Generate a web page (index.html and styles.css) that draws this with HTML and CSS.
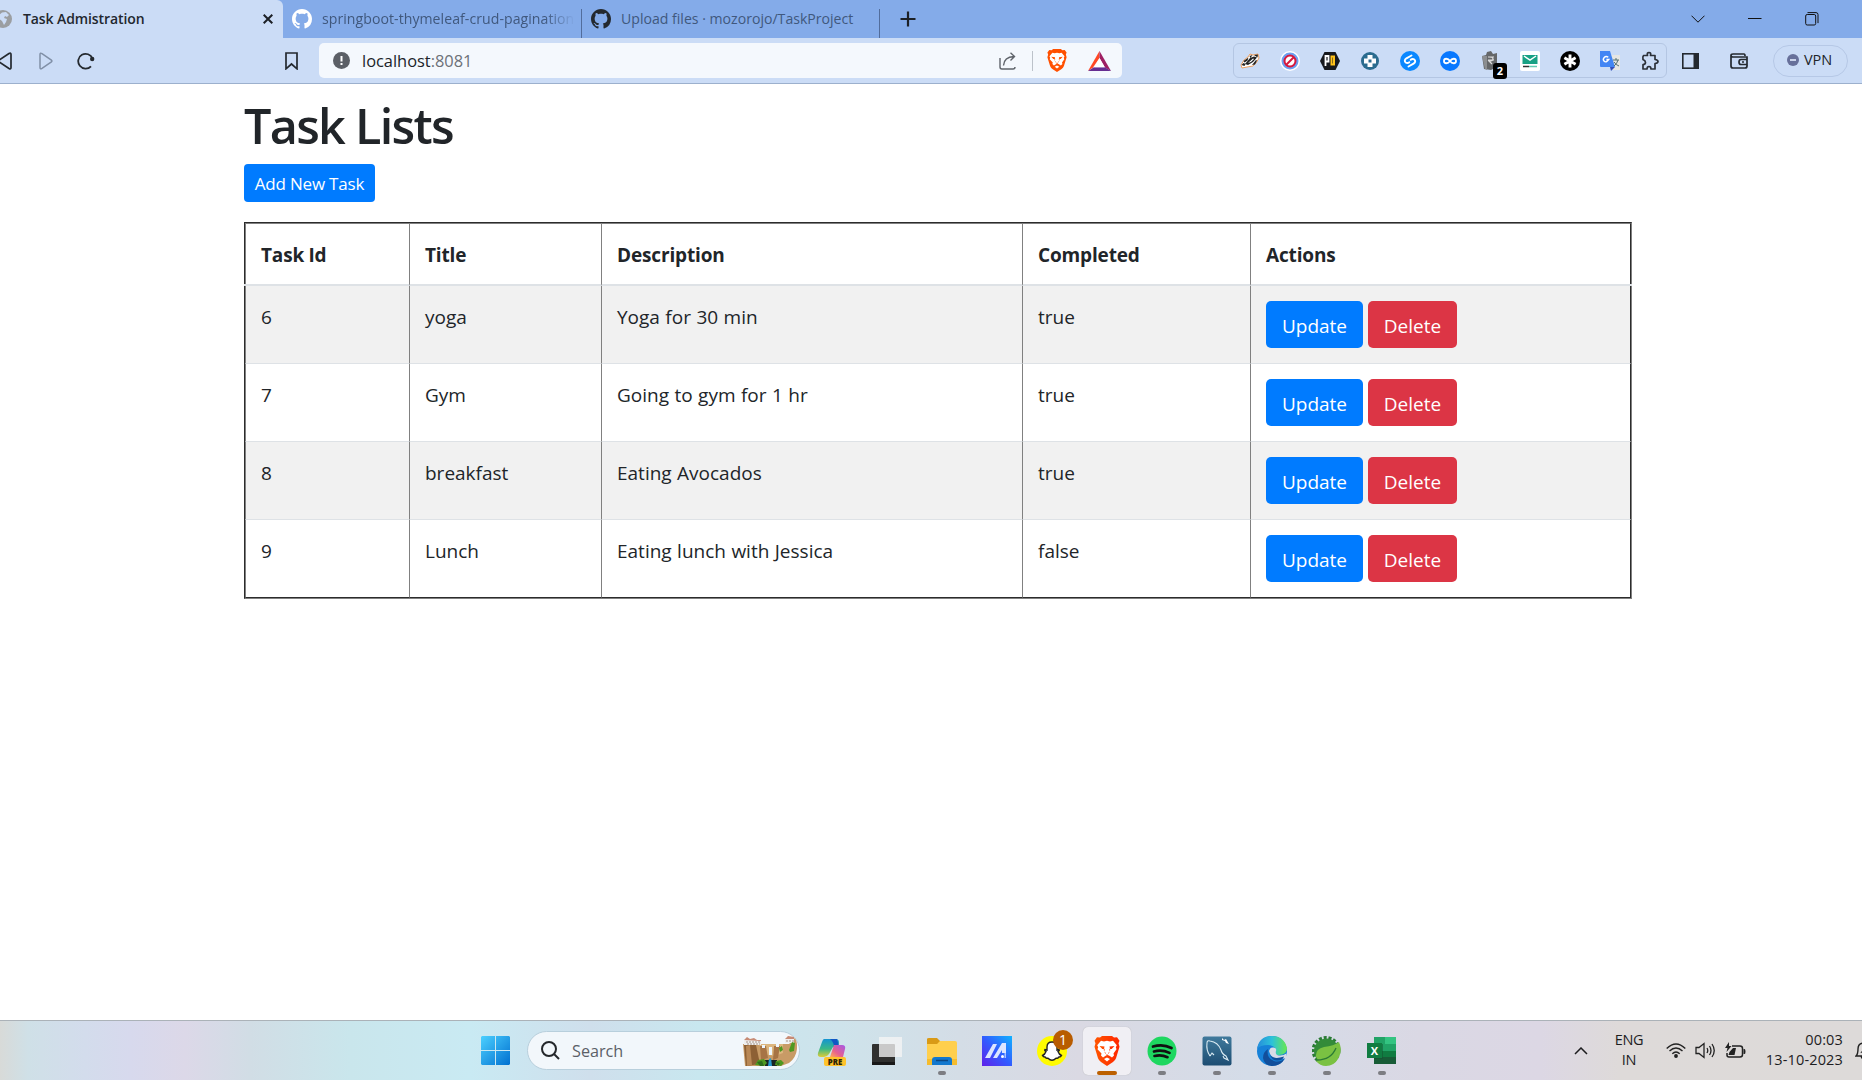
FILE: index.html
```html
<!DOCTYPE html>
<html lang="en">
<head>
<meta charset="utf-8">
<title>Task Admistration</title>
<link rel="stylesheet" href="styles.css">
</head>
<body>
<svg class="defs" width="0" height="0" aria-hidden="true">
  <defs>
    <path id="octocat" d="M8 0C3.58 0 0 3.58 0 8c0 3.54 2.29 6.53 5.47 7.59.4.07.55-.17.55-.38 0-.19-.01-.82-.01-1.49-2.01.37-2.53-.49-2.69-.94-.09-.23-.48-.94-.82-1.13-.28-.15-.68-.52-.01-.53.63-.01 1.08.58 1.23.82.72 1.21 1.87.87 2.33.66.07-.52.28-.87.51-1.07-1.78-.2-3.64-.89-3.64-3.95 0-.87.31-1.59.82-2.15-.08-.2-.36-1.02.08-2.12 0 0 .67-.21 2.2.82.64-.18 1.32-.27 2-.27s1.36.09 2 .27c1.53-1.04 2.2-.82 2.2-.82.44 1.1.16 1.92.08 2.12.51.56.82 1.27.82 2.15 0 3.07-1.87 3.75-3.65 3.95.29.25.54.73.54 1.48 0 1.07-.01 1.93-.01 2.2 0 .21.15.46.55.38A8.01 8.01 0 0 0 16 8c0-4.42-3.58-8-8-8z"/>
    <g id="lion">
      <path d="M8 1.500 10 0h10l2 1.500 3-.3 2.500 3.500-1 2.500 1 3.500-3.500 11.500q-1 2.500-3 3.800L15 30l-6-4q-2-1.300-3-3.800L2.500 10.700l1-3.500-1-2.500L5 1.200z"/>
      <path fill="#fff" d="m9 4.800 3 .7 3-.7 3 .7 3-.7 3.800 4.500-1 2 .7 2-3 4.200.5 2-2 2-3-2-1.500-.5-1.500.5-3 2-2-2 .5-2-4-4.200.7-2-1-2zM12 23l3-1.600 3 1.600-3 2.400z"/>
      <path d="m7.500 10 5 .6-.8 3.500.8 2 1.500.8v1.500h2v-1.500l1.500-.8.8-2-.8-3.500 5-.6-2.800 3-2.400-.2.500 3.300-1.800 2L15 20l-1-1.900-1.800-2 .5-3.300-2.400.2z"/>
    </g>
  </defs>
</svg>

<header class="browser">
  <div class="tabs">
    <div class="tab tab-active">
      <svg class="globe" width="18" height="18" viewBox="0 0 18 18"><circle cx="9" cy="9" r="9" fill="#9b9ea1"/><path fill="#cbdcf6" d="M8 2.500 12 2l3 3-2 2-2-1-1 2 3 1-1 3-2 3-2-4-4-3 1-3z"/></svg>
      <span class="tab-title">Task Admistration</span>
      <svg class="close" width="10" height="10" viewBox="0 0 10 10"><path d="m.7.7 8.600 8.600M9.300.7.7 9.300" stroke="#1c2026" stroke-width="2"/></svg>
    </div>
    <div class="tab tab-repo">
      <svg width="20" height="20" viewBox="0 0 16 16" fill="#fff"><use href="#octocat"/></svg>
      <span class="tab-title faded">springboot-thymeleaf-crud-pagination</span>
    </div>
    <div class="tab tab-upload">
      <svg width="20" height="20" viewBox="0 0 16 16" fill="#24292f"><use href="#octocat"/></svg>
      <span class="tab-title">Upload files · mozorojo/TaskProject</span>
    </div>
    <svg class="new-tab" width="16" height="16" viewBox="0 0 16 16"><path d="M8 .5v15M.5 8h15" stroke="#1c2026" stroke-width="2.200"/></svg>
    <div class="window-controls">
      <svg width="14" height="8" viewBox="0 0 14 8"><path d="m.5.7 6.500 6.500L13.500.7" fill="none" stroke="#111"/></svg>
      <svg width="14" height="14" viewBox="0 0 14 14"><path d="M0 6.500h13.500" stroke="#111"/></svg>
      <svg width="14" height="14" viewBox="0 0 14 14" fill="none" stroke="#111"><rect x=".7" y="2.500" width="10" height="10.500" rx="1.500"/><path d="M2.500.6H11q2 0 2 2v8.500"/></svg>
    </div>
  </div>

  <div class="toolbar">
    <svg class="back" width="16" height="20" viewBox="0 0 16 20"><path d="M13 2.500q2-1.200 2 1v13q0 2.200-2 1L3 10.800q-1-.8 0-1.600z" fill="none" stroke="#24292f" stroke-width="1.700"/></svg>
    <svg class="forward" width="14" height="18" viewBox="0 0 14 18"><path d="M3 1.700Q1 .5 1 2.500v13q0 2 2 .8l9.400-6.500q1-.8 0-1.600z" fill="none" stroke="#8190a7" stroke-width="1.500"/></svg>
    <svg class="reload" width="18" height="18" viewBox="0 0 18 18"><path d="M15.500 6.500A7.400 7.400 0 1 0 14 14.300" fill="none" stroke="#24292f" stroke-width="1.800"/><circle cx="15.200" cy="7" r="2.200" fill="#24292f"/></svg>
    <svg class="bookmark" width="13" height="18" viewBox="0 0 13 18"><path d="M1 1h11v15.800L6.500 12 1 16.800z" fill="none" stroke="#24292f" stroke-width="1.700"/></svg>
    <div class="address">
      <svg width="17" height="17" viewBox="0 0 17 17"><circle cx="8.500" cy="8.500" r="8.500" fill="#5b5f66"/><path d="M8.500 4v5.500M8.500 11v2" stroke="#fff" stroke-width="2"/></svg>
      <span class="url">localhost<span class="port">:8081</span></span>
      <svg class="share" width="18" height="18" viewBox="0 0 18 18" fill="none" stroke="#5f646b" stroke-width="1.400"><path d="M1 6v9q0 2 2 2h11q2 0 2-2M4.500 13.500Q5 5 15 4.500M11.500.8 15.500 4.500l-4 4"/></svg>
      <i class="divider"></i>
      <svg class="shield" width="20" height="23" viewBox="2 0 26 30" fill="#ff5000" preserveAspectRatio="none"><use href="#lion"/></svg>
      <svg width="23" height="20" viewBox="0 0 23 20"><path fill="#ff4724" d="M11.500 0v7L5 16.500 0 20z"/><path fill="#9e1f63" d="M11.500 0 23 20l-6-3.500L11.500 7z"/><path fill="#662d91" d="M0 20h23l-6-3.800H6z"/><path fill="#fff" d="m11.500 7 5.300 9.200H6.200z"/></svg>
    </div>

    <div class="extensions">
      <svg viewBox="0 0 20 20"><path fill="#fff" stroke="#ee8b3a" stroke-width=".8" d="m1 14 3-5 4-3 2-3 3 1 5-1 1 4-3 5-3 3-6 1-5 1z"/><path fill="#222" d="m1.500 14 2-2 2 1-1 2zM5 13l5-6 4-1.500 3 1-4 4.500-5 3zM9.500 5l3-1-2 3zM14 4l4-.5-.5 3zM3.500 10l5-3.500-1 3-3 2zM12 14l4-5 1 .5-2 4z"/><path fill="#fff" d="m8 12 5-4.500 1 .5-3 3z"/></svg>
      <svg viewBox="0 0 20 20"><circle cx="10" cy="10" r="10" fill="#fff"/><circle cx="10" cy="10" r="7" fill="#fff" stroke="#6c9ff0" stroke-width="3"/><circle cx="10" cy="10" r="5.500" fill="#fff" stroke="#d7193d" stroke-width="2"/><path d="m6 14 8-8" stroke="#d7193d" stroke-width="2"/></svg>
      <svg viewBox="0 0 20 20"><path fill="#17191d" d="M4.500 1h11L20 10l-4.500 9h-11L0 10z"/><path fill="none" stroke="#fff" stroke-width="1.800" d="M5.500 15V5h3v5.500h-3"/><path fill="none" stroke="#ffc21a" stroke-width="2" d="M11.500 5.500H14v8h-2.500z"/></svg>
      <svg viewBox="0 0 20 20"><circle cx="10" cy="10" r="9" fill="#2b6c8f"/><path fill="#fff" d="M7.500 4h5v3.500H16v5h-3.500V16h-5v-3.500H4v-5h3.500z"/><path fill="#2b6c8f" d="M8.500 8.500h3v3h-3z"/></svg>
      <svg viewBox="0 0 20 20"><circle cx="10" cy="10" r="10" fill="#0a88ff"/><path fill="none" stroke="#fff" stroke-width="1.900" stroke-linecap="round" d="M11.500 4.500 6.500 7.300q-3 2.200-.8 4.200 1.800 1.200 3.600-.3M8.500 15.500l5-2.800q3-2.200.8-4.200-1.800-1.200-3.600.3"/></svg>
      <svg viewBox="0 0 20 20"><circle cx="10" cy="10" r="10" fill="#0878ff"/><path fill="none" stroke="#fff" stroke-width="1.800" d="M10 10c-2-3-6-3-6 0s4 3 6 0 6-3 6 0-4 3-6 0z"/></svg>
      <span class="ext-badge"><svg viewBox="0 0 20 20"><path fill="#656769" d="m2 5 4-1 1-3 4-1 2 3 4-1v14l-6 3-7-1z"/><path fill="#8c8e90" d="m2 5 3 13 2 1V5z"/><path fill="none" stroke="#ddd" stroke-width="1.200" d="M8 6h6M8 9h6M9 6q4 0 4 2t-4 2l3 3"/></svg><b>2</b></span>
      <svg viewBox="0 0 20 20"><rect width="20" height="20" rx="2" fill="#fff"/><path fill="#18a184" d="M2.500 4h15v9h-15z"/><path fill="none" stroke="#fff" stroke-width="1.500" d="m4 5 6 4 6-4"/><path d="M3 15.500h6" stroke="#333" stroke-width="1.500"/><path d="M9 15.500h8" stroke="#62cbb2" stroke-width="1.500"/></svg>
      <svg viewBox="0 0 20 20"><circle cx="10" cy="10" r="10" fill="#000"/><path d="M10 3.500v13M4.400 6.800l11.200 6.400M15.600 6.800 4.400 13.200" stroke="#fff" stroke-width="2.900"/></svg>
      <svg viewBox="0 0 20 20"><path fill="#e6e6e4" d="M7 4h13v15h-8z"/><path fill="#4285f4" d="M0 0h10l5 16H1q-1 0-1-1z"/><path fill="#3550b8" d="M10 16h5l-4 4z"/><path fill="none" stroke="#fff" stroke-width="1.400" d="M8.300 6.300Q6 4.500 4.200 6.500t0 3.800 4.500-1.800H6.400"/><path fill="none" stroke="#55706f" d="M13 9h6M16 7v2m2 0q-1 4-4 6m0-4q2 3 5 4"/></svg>
      <svg viewBox="0 0 20 20"><path fill="none" stroke="#2b3038" stroke-width="1.700" stroke-linejoin="round" d="M3.500 4.500h4q-.8-3 1.500-3t1.500 3h4.500v4q3 .3 3 2t-3 2v5.500h-4q0-2.500-2-2.500t-2 2.500H3v-4.500q2.500 0 2.500-2T3 8.500q-.5-3 .5-4z"/></svg>
    </div>
    <svg class="panel" width="17" height="16" viewBox="0 0 17 16"><rect x=".8" y=".8" width="15.400" height="14.400" fill="none" stroke="#24292f" stroke-width="1.600"/><path fill="#24292f" d="M11.500 0H17v16h-5.500z"/></svg>
    <svg class="wallet" width="18" height="16" viewBox="0 0 18 16" fill="none" stroke="#24292f" stroke-width="1.700"><path d="M17 6V4H3Q1 4 1 2.500T3 1h11q1 0 1 2M1 2.500V13q0 2 2 2h12q2 0 2-2v-1"/><path d="M17 6.500h-6Q9 6.500 9 9t2 2.500h6zM12 9h2"/></svg>
    <div class="vpn"><svg width="12" height="12" viewBox="0 0 12 12"><circle cx="6" cy="6" r="6" fill="#67709a"/><path d="M3 6h6" stroke="#dce6f8" stroke-width="1.700"/></svg><span>VPN</span></div>
  </div>
</header>

<main class="page">
  <h1>Task Lists</h1>
  <a class="btn btn-primary btn-sm">Add New Task</a>
  <table class="tasks">
    <colgroup><col class="c-id"><col class="c-title"><col class="c-desc"><col class="c-done"><col class="c-actions"></colgroup>
    <thead>
      <tr><th>Task Id</th><th>Title</th><th>Description</th><th>Completed</th><th>Actions</th></tr>
    </thead>
    <tbody>
      <tr><td>6</td><td>yoga</td><td>Yoga for 30 min</td><td>true</td><td><div class="actions"><a class="btn btn-primary">Update</a><a class="btn btn-danger">Delete</a></div></td></tr>
      <tr><td>7</td><td>Gym</td><td>Going to gym for 1 hr</td><td>true</td><td><div class="actions"><a class="btn btn-primary">Update</a><a class="btn btn-danger">Delete</a></div></td></tr>
      <tr><td>8</td><td>breakfast</td><td>Eating Avocados</td><td>true</td><td><div class="actions"><a class="btn btn-primary">Update</a><a class="btn btn-danger">Delete</a></div></td></tr>
      <tr><td>9</td><td>Lunch</td><td>Eating lunch with Jessica</td><td>false</td><td><div class="actions"><a class="btn btn-primary">Update</a><a class="btn btn-danger">Delete</a></div></td></tr>
    </tbody>
  </table>
</main>

<footer class="taskbar">
  <svg class="start" width="29" height="29" viewBox="0 0 29 29"><defs><linearGradient id="win" x2="1" y2="1"><stop stop-color="#4cd0ff"/><stop offset="1" stop-color="#0070d0"/></linearGradient></defs><path fill="url(#win)" d="M1 0h13v14H0V1zM15 0h13l1 1v13H15zM0 15h14v14H1l-1-1zM15 15h14v13l-1 1H15z"/></svg>
  <div class="search">
    <svg width="19" height="19" viewBox="0 0 19 19" fill="none" stroke="#24272b" stroke-width="2"><circle cx="8" cy="8" r="7"/><path d="m13 13 5 5"/></svg>
    <span>Search</span>
    <svg class="scene" width="54" height="30" viewBox="0 0 54 30">
      <path fill="#c89b66" d="M0 8h46l6-6q3 6 2 11-1 9-8 14l-8 3H2z"/><path fill="#8d6035" d="M1 9h12l4 19-14 2z"/><path fill="#b98856" d="m3 10 4-1 2 20-5 1z"/><path fill="#dcb67f" d="M16 8h24v9l-8 3-12-2z"/><path fill="#a77445" d="M17 10h6l2 12-7 2zM31 10h6l-2 12-5 2z"/>
      <path fill="#eee" d="M1 4h17v5H1zM42 2h9v5h-9z"/><path fill="#c78b75" d="m1 4 3-3 3 2 4-1 3 2 4 0v1zM42 3l3-3 6 1v2z"/><path stroke="#a79386" d="M3 6h14M4 8h13M43 5h8" stroke-dasharray="2 1"/>
      <path fill="#eef7ff" d="M26 11h3v8h-3zM19 9h3v3h-3zM33 8h3v3h-3z"/><path fill="#1b2423" d="M22 24h12v6H22z"/><path fill="#289bd0" d="m26 23 2-1 1 8h-4z"/>
      <path fill="#4f9820" d="m12 29 3-5 6-1 3 4-3 3zM32 29l1-4 5-1 3 3-3 3zM46 14l3-8 3 1-1 8-4 1zM36 12l3-2 1 4-3 2z"/><path fill="#2e6d1c" d="m14 26 5-1 2 5h-4zM33 26l4 1-2 3z"/>
    </svg>
  </div>
  <nav class="apps">
    <span class="app"><svg viewBox="0 0 30 30"><defs><linearGradient id="cpa" x2="0" y2="1"><stop stop-color="#1494d2"/><stop offset=".55" stop-color="#39b887"/><stop offset="1" stop-color="#e0cd36"/></linearGradient><linearGradient id="cpb" x1="1" x2="0" y2="1"><stop stop-color="#a558e8"/><stop offset=".6" stop-color="#e6618e"/><stop offset="1" stop-color="#ffb052"/></linearGradient></defs><path fill="url(#cpa)" d="M7 3h12q3 0 3 4l-1 4h-5l-4 7q-2 3-5 3H4q-4 0-3-4L5 6q1-3 2-3z"/><path fill="#1257c4" d="M13 3h7l2 7h-5q-1-5-4-7z"/><path fill="url(#cpb)" d="M17 9h8q4 0 3 4l-2 8H13z"/><rect x="7" y="21" width="22" height="9" rx="2" fill="#ffc32b"/><text x="18" y="28.500" text-anchor="middle" class="pre">PRE</text></svg></span>
    <span class="app"><svg viewBox="0 0 30 30"><rect y="8" width="23" height="21" rx="1" fill="#30302f"/><path fill="#191919" d="M0 26h23v3H0z"/><path fill="#f5f5f5" fill-opacity=".78" d="M7 1h23v20H7z"/></svg></span>
    <span class="app running"><svg viewBox="0 0 30 30"><path fill="#d99a16" d="M0 3q0-1 2-1h8l3 3v5H0z"/><path fill="#ffcf4d" d="M0 8h10l3-3h15q2 0 2 2v22H0z"/><path fill="#f6bc2d" d="M0 23h30v6H0z"/><path fill="#1378ce" d="M5 29v-5q0-3 3-3h14q3 0 3 3v5z"/><path stroke="#0d4782" stroke-width="1.500" d="M9 24.500h12"/></svg></span>
    <span class="app"><svg viewBox="0 0 30 30"><defs><linearGradient id="asus" x1="1" x2="0" y2="1"><stop stop-color="#10b2ff"/><stop offset=".5" stop-color="#315cff"/><stop offset="1" stop-color="#6020e9"/></linearGradient></defs><path fill="url(#asus)" d="M0 0h30v30H0z"/><path fill="#dce5ff" d="M11 8h4L8 22H3zM20 7h4v10h-4v-3l-5 8h-4z"/><circle cx="20.500" cy="20.500" r="1.500" fill="#fff"/><path fill="#a9c2ff" d="M22.500 17H24v5h-1.500z"/></svg></span>
    <span class="app"><svg viewBox="0 0 30 30"><circle cx="15" cy="15" r="15" fill="#fffb00"/><path fill="#fff" stroke="#222" stroke-width="1.400" d="M15 6q5 0 5 5v3l2-.5q1 1-1 2 1 3 3.500 4-.5 1.500-3 1.700-.5 1.500-2.500 1-2 2-4 2t-4-2q-2 .5-2.500-1-2.500-.2-3-1.700Q8 18.500 9 15.500q-2-1-1-2l2 .5v-3q0-5 5-5z"/></svg><b class="count">1</b></span>
    <span class="app active"><svg viewBox="0 0 30 30"><defs><linearGradient id="brv"><stop stop-color="#ff5500"/><stop offset="1" stop-color="#ff2600"/></linearGradient></defs><g fill="url(#brv)"><use href="#lion"/></g></svg></span>
    <span class="app running"><svg viewBox="0 0 30 30"><circle cx="15" cy="15" r="14.500" fill="#1ed760"/><path fill="none" stroke="#111" stroke-width="2.700" stroke-linecap="round" d="M6 10.500q10-3 18.500 1.500M7 15.500q8-2.200 15.500 1.400M7.500 20q7-1.600 13 1.200"/></svg></span>
    <span class="app running"><svg viewBox="0 0 30 30"><defs><linearGradient id="sql" x2="0" y2="1"><stop stop-color="#407a9c"/><stop offset="1" stop-color="#1d4d72"/></linearGradient></defs><rect x=".5" y=".5" width="29" height="29" rx="2" fill="url(#sql)"/><path fill="none" stroke="#d9eaf2" stroke-width="1.100" d="M8 20Q4 14 5 7q0-3 3-2 8 1 11 9 1 4 5 6l2 4-4-2-1-2M8 20l2-3 2 2"/><path fill="#fff" d="m20 2 2 2 2-1 3 5-3-1-1-2-3-1z"/></svg></span>
    <span class="app running"><svg viewBox="0 0 30 30"><defs><linearGradient id="edg"><stop stop-color="#258cdb"/><stop offset=".5" stop-color="#2cc2d9"/><stop offset="1" stop-color="#68e84f"/></linearGradient></defs><circle cx="15" cy="15" r="15" fill="#1681d8"/><path fill="url(#edg)" d="M0 13Q2 0 15 0q12 0 15 12 0 7-8 7-5 0-3-4-1-6-8-6Q3 9 0 13z"/><path fill="#124f9b" d="M11 13q-2 9 6 12 6 2 11-3-4 8-13 8-8-1-9-8 0-6 5-9z"/><path fill="#d9dbe7" d="M12 15q1-4 4.500-3.500T19 15q-1 4 3 4.500 4 .5 7.500-2v4.500q-3 1-6 .5-10 .5-11.500-7.500z"/><path fill="#124f9b" d="M13 19q4 5 14 1.500-1 4-7 4-5 0-7-5.500z"/></svg></span>
    <span class="app running"><svg viewBox="0 0 30 30"><circle cx="14" cy="14.500" r="12.800" fill="none" stroke="#2b7a35" stroke-width="3.400" stroke-dasharray="3 1.800"/><circle cx="14.500" cy="15" r="12.500" fill="#338b39"/><path fill="#7ac142" d="M27 6q4 9-1 17-4 7-12 7-6 0-10-5 3-1 0-4Q3 13 12 11q10-1 15-5z"/><path fill="none" stroke="#2b7a35" stroke-width="1.300" d="M5 24q14 0 19-12"/></svg></span>
    <span class="app running"><svg viewBox="0 0 30 30"><path fill="#21a366" d="M7 1h22v27H7z"/><path fill="#33c481" d="M18 1h11v7H18z"/><path fill="#107c41" d="M7 15h22v6H7z"/><path fill="#185c37" d="M7 21h22v7H7z"/><path fill="#134f30" d="M7 8h9v15H7z" opacity=".5"/><path fill="#107c41" d="M0 7h15v15H0z"/><text x="7.500" y="18.800" text-anchor="middle" class="excel">X</text></svg></span>
  </nav>
  <div class="tray">
    <svg class="up" width="14" height="8" viewBox="0 0 14 8"><path d="m1 7 6-6 6 6" fill="none" stroke="#1d1d1f" stroke-width="1.500"/></svg>
    <div class="lang"><span>ENG</span><span>IN</span></div>
    <svg class="wifi" width="20" height="15" viewBox="0 0 20 15" fill="none" stroke="#222" stroke-width="1.400"><path d="M.7 5.500q9.300-9 18.600 0M3.500 8q6.500-6 13 0M6.300 10.800q3.700-3.500 7.400 0"/><circle cx="10" cy="13" r="1.200" fill="#222"/></svg>
    <svg class="speaker" width="21" height="17" viewBox="0 0 21 17" fill="none" stroke="#222" stroke-width="1.300"><path d="M1 5.500h3L9 1.500v14l-5-4H1zM12 6q1.500 2.500 0 5M14.500 4q3 4.500 0 9M17 2q4.500 6.500 0 13"/></svg>
    <svg class="battery" width="21" height="17" viewBox="0 0 21 17"><path d="M7 4h8q2.500 0 2.500 2.500v6Q17.500 15 15 15H4q-2 0-2-2v-2" fill="none" stroke="#222" stroke-width="1.500"/><path fill="#222" d="M18.500 7h1q1 0 1 2.500t-1 2.500h-1zM3.500 13l1-3L8 6h3l-1.500 7zM4 0 0 6h2.500L1.500 10 6.500 4H4z"/></svg>
    <div class="clock"><span>00:03</span><span>13-10-2023</span></div>
    <svg class="bell" width="18" height="18" viewBox="0 0 18 18"><path d="M1 14q2-2 2-7 0-6 6-6t6 6q0 5 2 7zM6 14q1 3 3 3M7 6h4l-4 4h4" fill="none" stroke="#222" stroke-width="1.400"/></svg>
  </div>
</footer>
</body>
</html>
```
FILE: styles.css
```css
* { box-sizing: border-box; }

body {
  margin: 0;
  width: 1862px;
  height: 1080px;
  overflow: hidden;
  display: flex;
  flex-direction: column;
  background: #fff;
  color: #212529;
  font-family: "Open Sans", "Noto Sans", sans-serif;
}

svg { display: block; flex: none; }
.defs { position: absolute; }

/* Browser chrome */
.browser { flex: none; }
.tabs {
  display: flex;
  align-items: center;
  height: 38px;
  background: #84abe9;
  font-size: 14.100px;
  white-space: nowrap;
}
.tab { display: flex; align-items: center; height: 38px; }
.tab-title { color: #40587d; line-height: 20px; padding-bottom: 1px; }
.tab-active { width: 283px; background: #cbdcf6; border-top-right-radius: 6px; padding-right: 10px; }
.tab-active .tab-title { color: #22272e; margin-left: 17px; font-size: 14px; font-weight: 600; letter-spacing: -.1px; }
.globe { margin-left: -6px; margin-right: -6px; }
.close { margin-left: auto; }
.tab-repo { width: 298px; padding-left: 9px; gap: 10px; }
.tab-repo .tab-title { flex: 1; overflow: hidden; margin-right: 6px; letter-spacing: .05px; }
.faded {
  -webkit-mask-image: linear-gradient(90deg, #000 88%, transparent);
  mask-image: linear-gradient(90deg, #000 88%, transparent);
}
.tab-upload { width: 299px; padding-left: 10px; gap: 10px; position: relative; }
.tab-upload::before, .tab-upload::after {
  content: "";
  position: absolute;
  top: 9px;
  bottom: 0;
  width: 1px;
  background: #526d9c;
}
.tab-upload::before { left: 0; }
.tab-upload::after { right: 0; }
.new-tab { margin-left: 20px; }
.window-controls { display: flex; align-items: center; gap: 43px; margin-left: auto; padding-right: 43px; }

.toolbar {
  display: flex;
  align-items: center;
  height: 46px;
  background: #cbdcf6;
  border-bottom: 1px solid #9cb0cd;
}
.toolbar > * { flex: none; }
.back { margin-left: -4px; }
.forward { margin-left: 27px; }
.reload { margin-left: 24px; }
.bookmark { margin-left: 190px; }
.address {
  display: flex;
  align-items: center;
  width: 803px;
  height: 35px;
  margin-left: 21px;
  padding: 0 11px 0 14px;
  background: #f4f8fd;
  border-radius: 5px;
}
.url { flex: 1; margin-left: 12px; font-size: 16.400px; color: #202329; }
.port { color: #6c7178; }
.divider { width: 1px; height: 20px; margin: 0 14px 0 15px; background: #bcc2ca; }
.shield { margin-right: 21px; }
.extensions {
  display: flex;
  align-items: center;
  gap: 20px;
  width: 434px;
  height: 35px;
  margin-left: 111px;
  padding-left: 6px;
  border: 1px solid #b4c6e3;
  border-radius: 6px;
}
.extensions svg { width: 20px; height: 20px; }
.ext-badge { position: relative; }
.ext-badge b {
  position: absolute;
  left: 13px;
  top: 12px;
  width: 14px;
  height: 16px;
  border-radius: 3px;
  background: #000;
  color: #fff;
  font-size: 11px;
  line-height: 16px;
  text-align: center;
}
.panel { margin-left: 15px; }
.wallet { margin-left: 31px; }
.vpn {
  display: flex;
  align-items: center;
  gap: 5px;
  width: 75px;
  height: 32px;
  margin-left: 25px;
  padding: 0 0 2px 13px;
  border: 1px solid #b6c8e6;
  border-radius: 16px;
  font-size: 14.500px;
  letter-spacing: -.1px;
}

/* Page content */
.page { flex: 1; width: 1388px; margin-left: 244px; padding-top: 12px; }
h1 { margin: 0 0 8px; height: 60px; font-size: 48.500px; line-height: 58px; font-weight: 600; letter-spacing: -1.700px; }
.btn {
  display: block;
  height: 47px;
  border-radius: 5px;
  color: #fff;
  font-size: 19px;
  line-height: 50px;
  text-align: center;
  white-space: nowrap;
}
.btn-primary { width: 97px; background: #007bff; }
.btn-danger { width: 89px; background: #dc3545; }
.btn-sm { width: 131px; height: 38px; border-radius: 4px; font-size: 17px; line-height: 39px; letter-spacing: -.2px; }

.tasks {
  width: 1388px;
  margin-top: 20px;
  table-layout: fixed;
  border-spacing: 0;
  border: 1px solid #2c2c2c;
  border-right-color: #808080;
  border-bottom-color: #808080;
  font-size: 19px;
  line-height: 30px;
  word-spacing: .5px;
}
.c-id { width: 165px; }
.c-title { width: 192px; }
.c-desc { width: 421px; }
.c-done { width: 228px; }
.tasks th, .tasks td { padding: 16px 15px 0; text-align: left; vertical-align: top; border-right: 1px solid #808080; }
.tasks th { position: relative; height: 63px; font-weight: 700; letter-spacing: -.15px; word-spacing: -.5px; border-top: 1px solid #808080; border-bottom: 2px solid #dee2e6; }
.tasks td { height: 78px; border-bottom: 1px solid #dee2e6; }
.tasks td:last-child { padding-top: 15px; }
.tasks th:first-child, .tasks td:first-child { border-left: 1px solid #808080; }
.tasks th:last-child, .tasks td:last-child { border-right-color: #2c2c2c; }
.tasks tbody tr:nth-child(odd) { background: #f1f1f1; }
.tasks tbody tr:last-child td { border-bottom-color: #2c2c2c; }
/* The header rule runs across the outer frame on both sides */
.tasks th:first-child::before, .tasks th:last-child::before {
  content: "";
  position: absolute;
  bottom: -2px;
  width: 2px;
  height: 2px;
  background: #dee2e6;
}
.tasks th:first-child::before { left: -2px; }
.tasks th:last-child::before { right: -2px; }
.actions { display: flex; gap: 5px; word-spacing: 0; }

/* Taskbar */
.taskbar {
  display: flex;
  align-items: center;
  flex: none;
  height: 60px;
  border-top: 1px solid #abb2b8;
  background: linear-gradient(90deg, #d8dad8 0, #cfe0e7 28px, #d3dcec 85px, #d7d9ed 130px, #dcd8e8 185px, #d1dde5 250px, #c9e6ec 350px, #c9eaf3 470px, #cfdfec 590px, #c8e7ef 700px, #cee3eb 840px, #d4dde6 960px, #dad9e3 1080px, #d4dce8 1250px, #dad8e4 1420px, #dcd7e4 1540px, #dedad9 1620px, #dddad9 1862px);
}
.taskbar > * { flex: none; }
.start { margin-left: 481px; }
.search {
  display: flex;
  align-items: center;
  width: 273px;
  height: 39px;
  margin-left: 17px;
  padding: 0 2px 0 13px;
  background: #f2f7fb;
  border: 1px solid #b8cfdc;
  border-radius: 20px;
}
.search span { flex: 1; margin-left: 12px; font-size: 16.200px; color: #5b6067; }
.apps { display: flex; gap: 7px; margin-left: 8px; }
.app { position: relative; display: flex; justify-content: center; width: 48px; height: 48px; padding-top: 9px; border-radius: 5px; }
.app svg { width: 30px; height: 30px; }
.active { background: #f0eff4; box-shadow: 0 0 1px #aaa; }
.running::after, .active::after {
  content: "";
  position: absolute;
  bottom: 0;
  left: 20px;
  width: 8px;
  height: 4px;
  border-radius: 2px;
  background: #7c7d82;
}
.active::after { left: 14px; width: 20px; background: #bc6000; }
.count {
  position: absolute;
  left: 25px;
  top: 3px;
  width: 20px;
  height: 20px;
  border-radius: 50%;
  background: #b85c00;
  color: #fff;
  font-size: 14px;
  line-height: 20px;
  font-weight: 400;
  text-align: center;
}
.pre { font-size: 7.800px; font-weight: 800; fill: #2c2307; }
.excel { font-size: 11px; font-weight: 700; fill: #fff; }
.tray { display: flex; align-items: center; margin-left: 168px; font-size: 14.500px; line-height: 20px; color: #1d1d1f; }
.tray > * { flex: none; }
.lang { width: 40px; margin-left: 21px; padding-bottom: 2px; display: flex; flex-direction: column; align-items: center; letter-spacing: -.3px; }
.wifi { margin-left: 17px; }
.speaker { margin-left: 9px; }
.battery { margin-left: 9px; }
.clock { width: 90px; margin-left: 7px; padding-bottom: 2px; display: flex; flex-direction: column; align-items: flex-end; white-space: nowrap; letter-spacing: .15px; }
.bell { margin-left: 12px; }
```
